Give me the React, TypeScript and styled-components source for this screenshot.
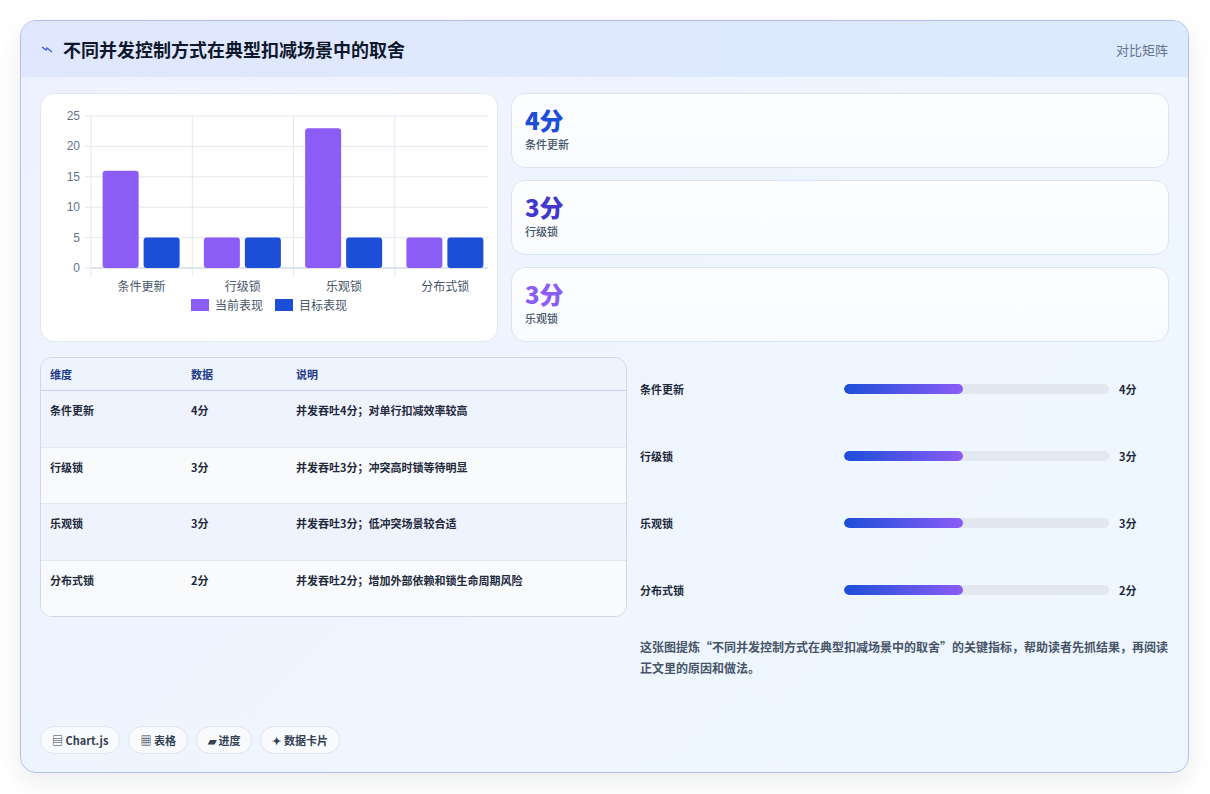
import React from "react";
import styled, { createGlobalStyle } from "styled-components";

const Global = createGlobalStyle`
  html, body { margin: 0; padding: 0; background: #ffffff; }
  body { font-family: "Noto Sans CJK SC", "Noto Sans", sans-serif; color: #1e293b; }
  * { box-sizing: border-box; }
`;

const Page = styled.div`
  width: 1210px; height: 794px; padding: 20px 21px 21px 20px;
`;
const Frame = styled.div`
  height: 753px; border: 1px solid #b4c0ec; border-radius: 16px;
  background: linear-gradient(135deg, #eef2ff 0%, #eff6ff 60%, #eef6ff 100%);
  box-shadow: 0 10px 24px rgba(15, 23, 42, 0.08);
  display: flex; flex-direction: column; overflow: hidden;
`;
const Header = styled.div`
  height: 56px; flex: none; display: flex; align-items: center; justify-content: space-between;
  padding: 0 20px 0 20px;
  background: linear-gradient(90deg, #e0e7ff 0%, #dbeafe 100%);
`;
const Title = styled.h1`
  margin: 0; font-size: 18px; font-weight: 700; color: #0f172a; display: flex; align-items: center; gap: 10px;
`;
const Tag = styled.span` font-size: 13px; color: #64748b; `;
const Body = styled.div`
  flex: 1; padding: 16px 19px 18px 19px; display: flex; flex-direction: column;
`;
const TopGrid = styled.div`
  display: grid; grid-template-columns: 458px 1fr; gap: 13px; height: 249px;
`;
const ChartCard = styled.div`
  background: #fff; border: 1px solid #e2e8f0; border-radius: 14px; padding: 10px 10px 0 10px;
  display: flex; flex-direction: column; align-items: center;
`;
const Legend = styled.div` display: flex; gap: 12px; font-size: 12px; color: #475569; margin-top: 2px; `;
const LegendItem = styled.span` display: flex; align-items: center; gap: 6px; `;
const Swatch = styled.span<{ $c: string }>` width: 18px; height: 12px; background: ${p => p.$c}; `;
const Stats = styled.div` display: flex; flex-direction: column; gap: 12px; `;
const Stat = styled.div`
  height: 75px; background: linear-gradient(180deg, #fdfeff, #f8fbff); border: 1px solid #dbe4f5; border-radius: 14px;
  padding: 10px 13px; display: flex; flex-direction: column;
`;
const StatValue = styled.div<{ $c: string }>` font-size: 24px; font-weight: 800; color: ${p => p.$c}; line-height: 32px; `;
const StatLabel = styled.div` font-size: 11px; color: #475569; font-weight: 500; `;
const BottomGrid = styled.div`
  display: grid; grid-template-columns: 587px 1fr; gap: 13px; margin-top: 15px;
`;
const TableCard = styled.div`
  border: 1px solid #cfd8ea; border-radius: 12px; overflow: hidden; background: #f8fafc; height: 260px;
`;
const Row = styled.div<{ $alt?: boolean; $head?: boolean }>`
  display: grid; grid-template-columns: 141px 105px 1fr; padding: 0 9px;
  height: ${p => (p.$head ? "33px" : "56.5px")};
  align-items: ${p => (p.$head ? "center" : "start")};
  padding-top: ${p => (p.$head ? "0" : "11px")};
  background: ${p => (p.$head ? "#eef4fe" : p.$alt ? "#f8fafc" : "#eff3fe")};
  border-bottom: 1px solid ${p => (p.$head ? "#c9d4ea" : "#e2e8f0")};
  &:last-child { border-bottom: none; }
  font-size: 11px; font-weight: ${p => (p.$head ? 700 : 600)}; color: ${p => (p.$head ? "#1e3a8a" : "#1e293b")};
`;
const Right = styled.div` display: flex; flex-direction: column; `;
const Bars = styled.div` display: flex; flex-direction: column; padding-top: 22px; gap: 48px; `;
const BarRow = styled.div`
  display: grid; grid-template-columns: 194px 265px auto; column-gap: 10px; align-items: center;
  font-size: 11px; font-weight: 600; color: #1e293b; height: 19px;
`;
const Track = styled.div` height: 10px; background: #e2e8f0; border-radius: 5px; overflow: hidden; `;
const Fill = styled.div` height: 100%; border-radius: 5px; background: linear-gradient(90deg, #1d4ed8, #8b5cf6); `;
const Note = styled.p`
  margin: 37px 0 0 0; font-size: 12px; font-weight: 600; line-height: 21px; color: #475569;
`;
const Chips = styled.div` margin-top: auto; display: flex; gap: 8px; `;
const Chip = styled.span`
  height: 28px; padding: 0 11px; border-radius: 14px; background: #f8fafc; border: 1px solid #dfe6f1;
  display: flex; align-items: center; gap: 4px; font-size: 11px; font-weight: 700; color: #334155;
`;

const data = [
  { name: "条件更新", cur: 16, tgt: 5, desc: "并发吞吐4分；对单行扣减效率较高", score: "4分" },
  { name: "行级锁", cur: 5, tgt: 5, desc: "并发吞吐3分；冲突高时锁等待明显", score: "3分" },
  { name: "乐观锁", cur: 23, tgt: 5, desc: "并发吞吐3分；低冲突场景较合适", score: "3分" },
  { name: "分布式锁", cur: 5, tgt: 5, desc: "并发吞吐2分；增加外部依赖和锁生命周期风险", score: "2分" },
];

function Chart() {
  const x0 = 40, x1 = 445, y0 = 12, y1 = 164;
  const h = (v: number) => ((y1 - y0) * v) / 25;
  const cw = (x1 - x0) / 4;
  return (
    <svg width="437" height="190" viewBox="0 0 437 190" style={{ fontFamily: "Liberation Sans, sans-serif" }}>
      {[0, 5, 10, 15, 20, 25].map(v => (
        <g key={v}>
          <line x1={x0 - 6} x2={x1} y1={y1 - h(v)} y2={y1 - h(v)} stroke="#e2e8f0" />
          <text x={x0 - 11} y={y1 - h(v) + 4} fontSize="12" fill="#64748b" textAnchor="end">{v}</text>
        </g>
      ))}
      {[0, 1, 2, 3, 4].map(i => (
        <line key={i} x1={x0 + i * cw} x2={x0 + i * cw} y1={y0} y2={y1 + 8} stroke="#e2e8f0" />
      ))}
      <line x1={x0} x2={x1} y1={y1} y2={y1} stroke="#cbd5e1" />
      {data.map((d, i) => {
        const cx = x0 + i * cw + cw / 2;
        return (
          <g key={d.name}>
            <rect x={cx - 39} y={y1 - h(d.cur)} width="36" height={h(d.cur)} rx="3" fill="#8b5cf6" />
            <rect x={cx + 2} y={y1 - h(d.tgt)} width="36" height={h(d.tgt)} rx="3" fill="#1d4ed8" />
            <text x={cx} y={y1 + 23} fontSize="12" fill="#475569" textAnchor="middle" fontFamily="Noto Sans CJK SC, sans-serif">{d.name}</text>
          </g>
        );
      })}
    </svg>
  );
}

export default function App() {
  return (
    <>
      <Global />
      <Page>
        <Frame>
          <Header>
            <Title>
              <svg width="12" height="10" viewBox="0 0 12 10"><path d="M1 3 L5 6 L6 4 L11 8" stroke="#3b5bdb" strokeWidth="1.4" fill="none" /></svg>
              不同并发控制方式在典型扣减场景中的取舍
            </Title>
            <Tag>对比矩阵</Tag>
          </Header>
          <Body>
            <TopGrid>
              <ChartCard>
                <Chart />
                <Legend>
                  <LegendItem><Swatch $c="#8b5cf6" />当前表现</LegendItem>
                  <LegendItem><Swatch $c="#1d4ed8" />目标表现</LegendItem>
                </Legend>
              </ChartCard>
              <Stats>
                <Stat><StatValue $c="#1d4ed8">4分</StatValue><StatLabel>条件更新</StatLabel></Stat>
                <Stat><StatValue $c="#4338ca">3分</StatValue><StatLabel>行级锁</StatLabel></Stat>
                <Stat><StatValue $c="#8b5cf6">3分</StatValue><StatLabel>乐观锁</StatLabel></Stat>
              </Stats>
            </TopGrid>
            <BottomGrid>
              <TableCard>
                <Row $head><span>维度</span><span>数据</span><span>说明</span></Row>
                {data.map((d, i) => (
                  <Row key={d.name} $alt={i % 2 === 1}><span>{d.name}</span><span>{d.score}</span><span>{d.desc}</span></Row>
                ))}
              </TableCard>
              <Right>
                <Bars>
                  {data.map(d => (
                    <BarRow key={d.name}>
                      <span>{d.name}</span>
                      <Track><Fill style={{ width: "45%" }} /></Track>
                      <span>{d.score}</span>
                    </BarRow>
                  ))}
                </Bars>
                <Note>这张图提炼“不同并发控制方式在典型扣减场景中的取舍”的关键指标，帮助读者先抓结果，再阅读正文里的原因和做法。</Note>
              </Right>
            </BottomGrid>
            <Chips>
              <Chip>▤ Chart.js</Chip>
              <Chip>▦ 表格</Chip>
              <Chip>▰ 进度</Chip>
              <Chip>✦ 数据卡片</Chip>
            </Chips>
          </Body>
        </Frame>
      </Page>
    </>
  );
}
